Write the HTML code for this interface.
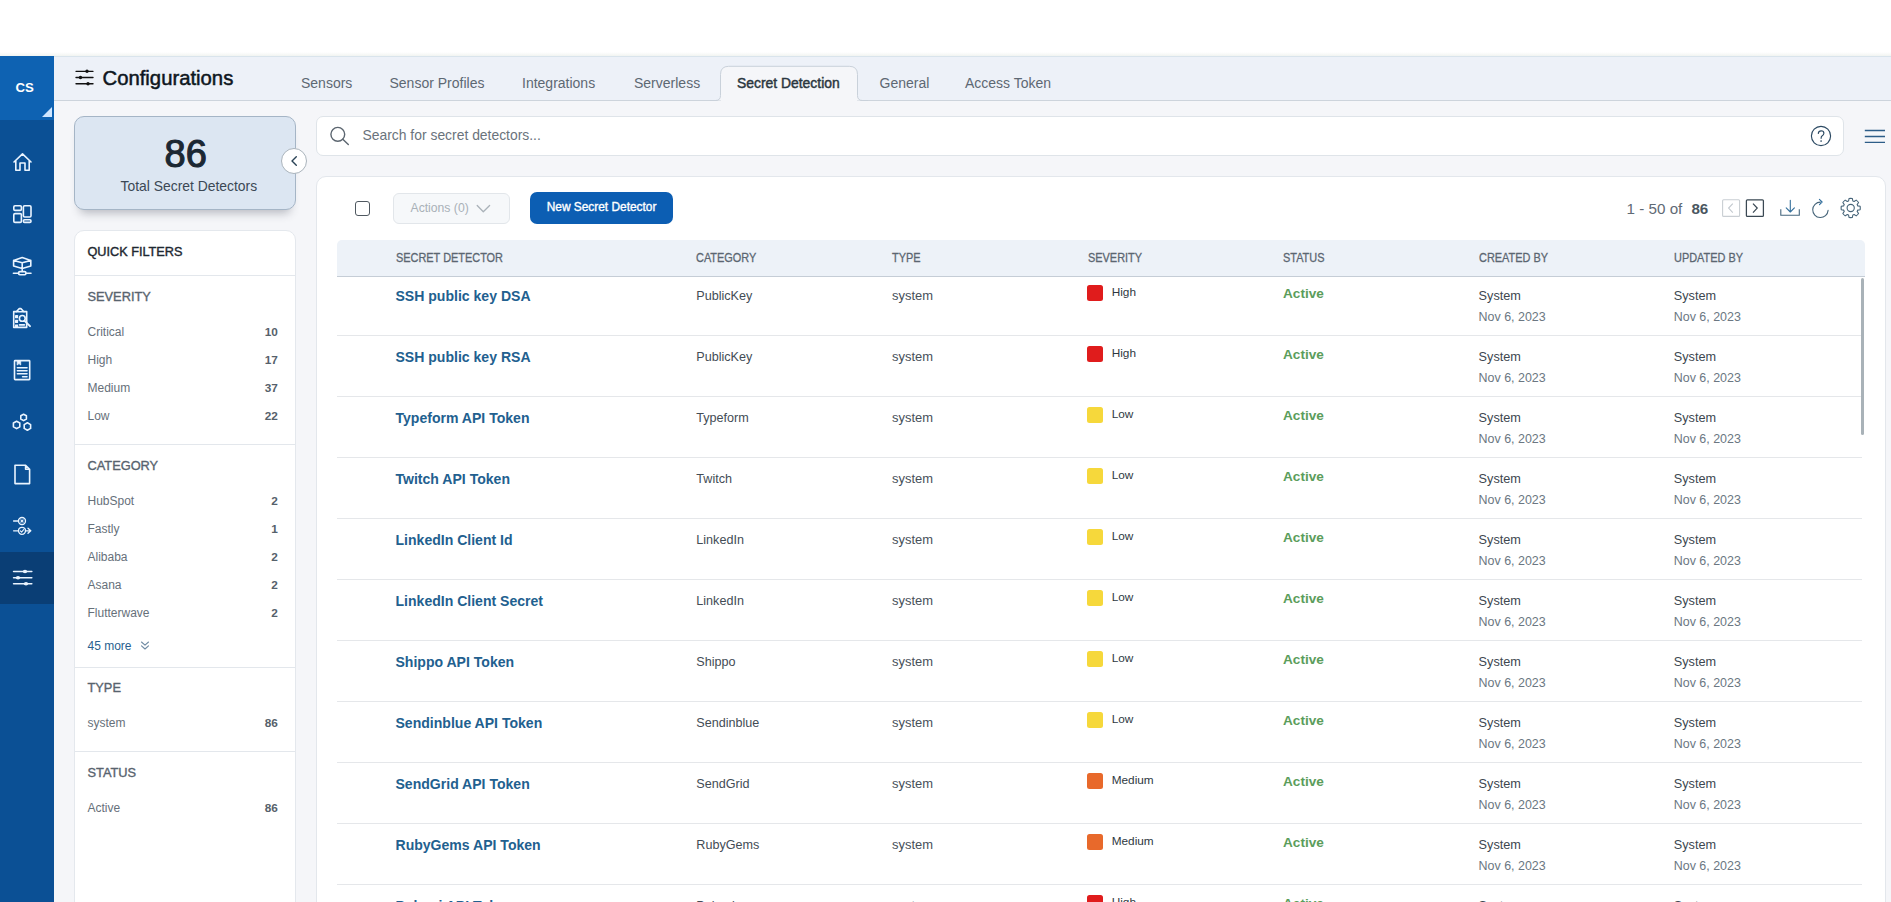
<!DOCTYPE html>
<html><head><meta charset="utf-8"><title>Configurations</title>
<style>
html,body{margin:0;padding:0;}
body{width:1891px;height:902px;overflow:hidden;position:relative;background:#fff;font-family:"Liberation Sans",sans-serif;}
.t{position:absolute;line-height:1;white-space:nowrap;}
.r{position:absolute;box-sizing:border-box;}
svg{position:absolute;overflow:visible;}
</style></head><body>

<div class="r" style="left:0px;top:52px;width:1891px;height:4px;background:linear-gradient(#fff,#f1f4f1);"></div>
<div class="r" style="left:54px;top:56px;width:1837px;height:846px;background:#f5f6f9;"></div>
<div class="r" style="left:54px;top:56px;width:1837px;height:45px;background:#edf1f8;border-top:1px solid #d9e4ec;border-bottom:1px solid #cdd4dc;"></div>
<div class="r" style="left:0px;top:56px;width:54px;height:846px;background:#0b5095;"></div>
<div class="r" style="left:0px;top:56px;width:54px;height:64px;background:#0e62b2;"></div>
<div class="r" style="left:0px;top:552px;width:54px;height:52px;background:#0a3e75;"></div>
<div class="t" style="left:15.5px;top:80.63px;font-size:13.2px;color:#fff;font-weight:700;">CS</div>
<svg style="left:42px;top:107px" width="10" height="10"><path d="M10 0 L10 10 L0 10 Z" fill="#cfe6ff"/></svg>
<svg style="left:0;top:0" width="54" height="902"><g fill="none" stroke="#eaf4ff" stroke-width="1.6" stroke-linejoin="round" stroke-linecap="round"><path d="M14 162 L22.5 153.8 L31 162 M15.8 160.5 V170.2 H20 V163 H25 V170.2 H29.2 V160.5"/><rect x="13.8" y="205.8" width="7.6" height="4.6" rx="1.2"/><rect x="13.8" y="213.6" width="7.6" height="8.8" rx="1.2"/><rect x="23.4" y="205.8" width="7.6" height="11.2" rx="1.2"/><rect x="23.4" y="219.8" width="7.6" height="2.6" rx="1.1"/><path d="M22.2 257.6 L30.8 260.4 V266 L22.2 268.4 L13.6 266 V260.4 Z M13.6 260.4 L22.2 262.8 L30.8 260.4 M22.2 262.8 V271.4"/><rect x="18.6" y="271.6" width="7.3" height="3.2" rx="1.2"/><path d="M13.4 273.2 H18.6 M25.9 273.2 H31"/><path d="M16.4 311.6 H13.7 V327.4 H26.7 V311.6 H23.9"/><path d="M16.3 311.7 L19.3 308.6 H20.9 L23.9 311.7 Z"/></g><g fill="#eaf4ff"><rect x="15" y="315.1" width="3.1" height="3.1" rx="0.4"/><rect x="15" y="319.8" width="3.1" height="3.1" rx="0.4"/><rect x="15" y="324.4" width="3.1" height="3.1" rx="0.4"/></g><g fill="none" stroke="#eaf4ff" stroke-width="1.6" stroke-linejoin="round" stroke-linecap="round"><circle cx="22.3" cy="318.4" r="2.9" fill="#0b5095"/><path d="M24.6 320.9 L30 326.1" stroke-width="2"/><path d="M19.6 324.8 H24.4" stroke-width="1.8"/><rect x="14.5" y="360.6" width="15.2" height="19" rx="0.6"/><path d="M17.2 361 V365 L19 363.6 L20.7 365 V361 Z" fill="#eaf4ff" stroke-width="0.8"/><path d="M17.4 367.7 H27 M17.4 370.7 H27 M17.4 373.7 H27 M22.6 376.7 H27"/><path d="M23.6 414.2 L26.4 415.8 V419 L23.6 420.6 L20.8 419 V415.8 Z"/><path d="M16.6 421.2 L19.8 423 V426.8 L16.6 428.6 L13.4 426.8 V423 Z"/><path d="M27.4 422.8 L30.6 424.6 V428.4 L27.4 430.2 L24.2 428.4 V424.6 Z"/><path d="M15 465.2 H25.6 L29.6 469.2 V483.6 H15 Z M25.6 465.2 V469.2 H29.6"/><g stroke-width="1.35"><path d="M13.6 521 H18.4 M13.6 530.8 H18.4 M25.6 530.8 H30.6 M28 528.3 L30.8 530.8 L28 533.3"/><circle cx="22" cy="521" r="3.5"/><circle cx="22" cy="530.8" r="3.5"/><path d="M20.9 519.9 L23.1 522.1 M23.1 519.9 L20.9 522.1 M20.4 530.9 L21.6 532.1 L23.6 529.7" stroke-width="1.1"/></g><path d="M13.6 571.5 H31.8 M13.6 577.7 H31.8 M13.6 583.7 H31.8"/></g><g fill="#eaf4ff"><ellipse cx="25" cy="571.5" rx="2.2" ry="1.7"/><ellipse cx="18" cy="577.7" rx="2.2" ry="1.7"/><ellipse cx="26" cy="583.7" rx="2.2" ry="1.7"/></g></svg>
<svg style="left:0;top:0" width="120" height="100"><g stroke="#111" stroke-width="1.35" stroke-linecap="round"><path d="M76 71.3 H93 M76 77.5 H93 M76 83.7 H93"/></g><g fill="#111"><circle cx="87" cy="71.3" r="1.7"/><circle cx="80.5" cy="77.5" r="1.7"/><circle cx="88" cy="83.7" r="1.7"/></g></svg>
<div class="t" style="left:102.5px;top:67.62px;font-size:20.3px;color:#0d1620;font-weight:400;-webkit-text-stroke:0.5px #0d1620;">Configurations</div>
<div class="t" style="left:301px;top:76.35px;font-size:14px;color:#5d6873;font-weight:400;">Sensors</div>
<div class="t" style="left:389.5px;top:76.35px;font-size:14px;color:#5d6873;font-weight:400;">Sensor Profiles</div>
<div class="t" style="left:522px;top:76.35px;font-size:14px;color:#5d6873;font-weight:400;">Integrations</div>
<div class="t" style="left:634px;top:76.35px;font-size:14px;color:#5d6873;font-weight:400;">Serverless</div>
<div class="t" style="left:879.5px;top:76.35px;font-size:14px;color:#5d6873;font-weight:400;">General</div>
<div class="t" style="left:965px;top:76.35px;font-size:14px;color:#5d6873;font-weight:400;">Access Token</div>
<svg style="left:710px;top:60px" width="160" height="42"><path d="M0 40.5 H5.5 Q10.5 40.5 10.5 35.5 V14.5 Q10.5 6.3 18.7 6.3 H139.3 Q147.5 6.3 147.5 14.5 V35.5 Q147.5 40.5 152.5 40.5 H158" fill="#f5f6f9" stroke="#c9d1da" stroke-width="1"/><rect x="11" y="40" width="136" height="3" fill="#f5f6f9"/></svg>
<div class="t" style="left:737px;top:77.23px;font-size:13.9px;color:#2b3640;font-weight:400;-webkit-text-stroke:0.45px #2b3640;">Secret Detection</div>
<div class="r" style="left:74px;top:116px;width:222px;height:94px;background:#dce6f2;border:1px solid #a5b5c6;border-radius:10px;box-shadow:0 9px 10px -6px rgba(50,55,70,0.32);"></div>
<div class="t" style="left:164.5px;top:135.03px;font-size:38px;color:#1b2733;font-weight:400;-webkit-text-stroke:1.1px #1b2733;">86</div>
<div class="t" style="left:120.5px;top:180.23px;font-size:13.9px;color:#3b4855;font-weight:400;">Total Secret Detectors</div>
<div class="r" style="left:281px;top:148px;width:26px;height:26px;background:#fff;border:1px solid #aab4bc;border-radius:50%;"></div>
<svg style="left:280px;top:147px" width="28" height="28"><path d="M16.3 9.8 L12 14 L16.3 18.2" fill="none" stroke="#2a4356" stroke-width="1.4" stroke-linecap="round" stroke-linejoin="round"/></svg>
<div class="r" style="left:74px;top:230px;width:222px;height:700px;background:#fff;border:1px solid #e4e8ed;border-radius:10px;"></div>
<div class="t" style="left:87.5px;top:246.15px;font-size:12.7px;color:#1e2831;font-weight:400;-webkit-text-stroke:0.4px #1e2831;">QUICK FILTERS</div>
<div class="r" style="left:75px;top:275px;width:220px;height:1px;background:#e3e7ec;"></div>

<div class="t" style="left:87.5px;top:290.96px;font-size:12.8px;color:#58636e;font-weight:400;-webkit-text-stroke:0.35px #58636e;">SEVERITY</div>
<div class="t" style="left:87.5px;top:325.84px;font-size:12px;color:#66707a;font-weight:400;">Critical</div>
<div class="t" style="right:1613.2px;top:326.81px;font-size:11.8px;color:#56616b;font-weight:700">10</div>
<div class="t" style="left:87.5px;top:353.84px;font-size:12px;color:#66707a;font-weight:400;">High</div>
<div class="t" style="right:1613.2px;top:354.81px;font-size:11.8px;color:#56616b;font-weight:700">17</div>
<div class="t" style="left:87.5px;top:381.84px;font-size:12px;color:#66707a;font-weight:400;">Medium</div>
<div class="t" style="right:1613.2px;top:382.81px;font-size:11.8px;color:#56616b;font-weight:700">37</div>
<div class="t" style="left:87.5px;top:409.84px;font-size:12px;color:#66707a;font-weight:400;">Low</div>
<div class="t" style="right:1613.2px;top:410.81px;font-size:11.8px;color:#56616b;font-weight:700">22</div>
<div class="r" style="left:75px;top:444px;width:220px;height:1px;background:#e3e7ec;"></div>
<div class="t" style="left:87.5px;top:460.16px;font-size:12.8px;color:#58636e;font-weight:400;-webkit-text-stroke:0.35px #58636e;">CATEGORY</div>
<div class="t" style="left:87.5px;top:495.04px;font-size:12px;color:#66707a;font-weight:400;">HubSpot</div>
<div class="t" style="right:1613.2px;top:496.01px;font-size:11.8px;color:#56616b;font-weight:700">2</div>
<div class="t" style="left:87.5px;top:523.04px;font-size:12px;color:#66707a;font-weight:400;">Fastly</div>
<div class="t" style="right:1613.2px;top:524.01px;font-size:11.8px;color:#56616b;font-weight:700">1</div>
<div class="t" style="left:87.5px;top:551.04px;font-size:12px;color:#66707a;font-weight:400;">Alibaba</div>
<div class="t" style="right:1613.2px;top:552.01px;font-size:11.8px;color:#56616b;font-weight:700">2</div>
<div class="t" style="left:87.5px;top:579.04px;font-size:12px;color:#66707a;font-weight:400;">Asana</div>
<div class="t" style="right:1613.2px;top:580.01px;font-size:11.8px;color:#56616b;font-weight:700">2</div>
<div class="t" style="left:87.5px;top:607.04px;font-size:12px;color:#66707a;font-weight:400;">Flutterwave</div>
<div class="t" style="right:1613.2px;top:608.01px;font-size:11.8px;color:#56616b;font-weight:700">2</div>
<div class="t" style="left:87.5px;top:639.84px;font-size:12px;color:#2a5f8f;font-weight:400;">45 more</div>
<svg style="left:140px;top:640px" width="12" height="12"><path d="M1.5 2 L5 5.2 L8.5 2 M1.5 5.8 L5 9 L8.5 5.8" fill="none" stroke="#6f8aa3" stroke-width="1.1" stroke-linecap="round" stroke-linejoin="round"/></svg>
<div class="r" style="left:75px;top:666.5px;width:220px;height:1px;background:#e3e7ec;"></div>
<div class="t" style="left:87.5px;top:682.46px;font-size:12.8px;color:#58636e;font-weight:400;-webkit-text-stroke:0.35px #58636e;">TYPE</div>
<div class="t" style="left:87.5px;top:716.84px;font-size:12px;color:#66707a;font-weight:400;">system</div>
<div class="t" style="right:1613.2px;top:717.81px;font-size:11.8px;color:#56616b;font-weight:700">86</div>
<div class="r" style="left:75px;top:751px;width:220px;height:1px;background:#e3e7ec;"></div>
<div class="t" style="left:87.5px;top:767.16px;font-size:12.8px;color:#58636e;font-weight:400;-webkit-text-stroke:0.35px #58636e;">STATUS</div>
<div class="t" style="left:87.5px;top:801.54px;font-size:12px;color:#66707a;font-weight:400;">Active</div>
<div class="t" style="right:1613.2px;top:802.51px;font-size:11.8px;color:#56616b;font-weight:700">86</div>
<div class="r" style="left:316px;top:116px;width:1527.5px;height:40px;background:#fff;border:1px solid #dfe4e9;border-radius:7px;"></div>
<svg style="left:320px;top:120px" width="40" height="32"><circle cx="17.8" cy="14.3" r="6.9" fill="none" stroke="#5c6670" stroke-width="1.4"/><path d="M22.8 19.3 L28.3 24.6" stroke="#5c6670" stroke-width="1.4" stroke-linecap="round"/></svg>
<div class="t" style="left:362.5px;top:129.43px;font-size:13.9px;color:#6a737c;font-weight:400;">Search for secret detectors...</div>
<svg style="left:1800px;top:115px" width="90" height="42"><circle cx="21" cy="21" r="9.6" fill="none" stroke="#2b4962" stroke-width="1.15"/><path d="M18.3 18.4 Q18.5 15.8 21.2 15.8 Q23.9 15.9 23.9 18.3 Q23.8 19.9 22 20.9 Q21.1 21.5 21.1 23.3" fill="none" stroke="#2b4962" stroke-width="1.15" stroke-linecap="round"/><circle cx="21.1" cy="26" r="0.85" fill="#2b4962"/><path d="M64.8 15.5 H85 M64.8 21.5 H85 M64.8 27.4 H85" stroke="#2d5d88" stroke-width="1.3"/></svg>
<div class="r" style="left:316px;top:175.5px;width:1569.5px;height:760px;background:#fff;border:1px solid #e3e7ec;border-radius:10px;"></div>
<div class="r" style="left:354.5px;top:200.5px;width:15.5px;height:15.5px;border:1.4px solid #4f5860;border-radius:3px;background:#fff;"></div>
<div class="r" style="left:393px;top:192.5px;width:116.5px;height:31.5px;background:#f6f8fa;border:1px solid #e2e6ea;border-radius:6px;"></div>
<div class="t" style="left:410.5px;top:201.67px;font-size:12.2px;color:#a9b1b8;font-weight:400;">Actions (0)</div>
<svg style="left:470px;top:198px" width="24" height="20"><path d="M7.2 7.5 L13.3 13.8 L19.6 7.5" fill="none" stroke="#aab2b9" stroke-width="1.3" stroke-linecap="round" stroke-linejoin="round"/></svg>
<div class="r" style="left:530px;top:192px;width:143px;height:32px;background:#0c5eb3;border-radius:7px;"></div>
<div class="t" style="left:546.7px;top:201.93px;font-size:11.9px;color:#fff;font-weight:400;-webkit-text-stroke:0.35px #fff;">New Secret Detector</div>
<div class="t" style="left:1626.6px;top:200.83px;font-size:15.2px;color:#5f6a75;font-weight:400;">1 - 50 of</div>
<div class="t" style="left:1691.4px;top:200.83px;font-size:15.2px;color:#4a5660;font-weight:700;">86</div>
<svg style="left:0;top:0" width="1891" height="300"><rect x="1722.6" y="199.8" width="17" height="16.6" rx="1" fill="none" stroke="#c9ced3" stroke-width="1.1"/><path d="M1732.8 203.6 L1728.6 208.1 L1732.8 212.6" fill="none" stroke="#c2c8ce" stroke-width="1.1"/><rect x="1746.4" y="199.8" width="17" height="16.6" rx="1" fill="none" stroke="#3a4853" stroke-width="1.25"/><path d="M1753 203.6 L1757.2 208.1 L1753 212.6" fill="none" stroke="#3a4853" stroke-width="1.25"/><g fill="none" stroke="#46677f" stroke-width="1.1" stroke-linecap="butt" stroke-linejoin="miter"><path d="M1780.8 209.2 V215.2 H1799.3 V209.2"/></g><g fill="none" stroke="#35709c" stroke-width="1.1" stroke-linecap="round" stroke-linejoin="round"><path d="M1790.3 200.2 V211.8 M1786.2 207.9 L1790.3 212 L1794.4 207.9"/></g><g fill="none" stroke="#466479" stroke-width="1.1" stroke-linecap="round" stroke-linejoin="round"><path d="M1820.4 202.1 A7.7 7.7 0 1 0 1828.1 210.4"/><path d="M1819.4 199.3 L1822.1 202 L1819.5 204.6" stroke="#2f6f9f"/><path d="M1848.57 201.02 L1849.03 198.55 A9.6 9.6 0 0 1 1852.37 198.55 L1852.83 201.02 A7.3 7.3 0 0 1 1854.13 201.55 L1856.21 200.14 A9.6 9.6 0 0 1 1858.56 202.49 L1857.15 204.57 A7.3 7.3 0 0 1 1857.68 205.87 L1860.15 206.33 A9.6 9.6 0 0 1 1860.15 209.67 L1857.68 210.13 A7.3 7.3 0 0 1 1857.15 211.43 L1858.56 213.51 A9.6 9.6 0 0 1 1856.21 215.86 L1854.13 214.45 A7.3 7.3 0 0 1 1852.83 214.98 L1852.37 217.45 A9.6 9.6 0 0 1 1849.03 217.45 L1848.57 214.98 A7.3 7.3 0 0 1 1847.27 214.45 L1845.19 215.86 A9.6 9.6 0 0 1 1842.84 213.51 L1844.25 211.43 A7.3 7.3 0 0 1 1843.72 210.13 L1841.25 209.67 A9.6 9.6 0 0 1 1841.25 206.33 L1843.72 205.87 A7.3 7.3 0 0 1 1844.25 204.57 L1842.84 202.49 A9.6 9.6 0 0 1 1845.19 200.14 L1847.27 201.55 A7.3 7.3 0 0 1 1848.57 201.02 Z"/><circle cx="1850.7" cy="208" r="3.6"/></g></svg>
<div class="r" style="left:336.7px;top:240.3px;width:1528px;height:36.5px;background:#edf2f8;border-bottom:1px solid #c5cdd6;border-radius:5px 5px 0 0;"></div>
<div class="t" style="left:395.5px;top:251.00px;font-size:13px;color:#5b6671;font-weight:400;-webkit-text-stroke:0.3px #5b6671;"><span style="display:inline-block;transform:scaleX(0.84);transform-origin:0 0">SECRET DETECTOR</span></div>
<div class="t" style="left:696.3px;top:251.00px;font-size:13px;color:#5b6671;font-weight:400;-webkit-text-stroke:0.3px #5b6671;"><span style="display:inline-block;transform:scaleX(0.84);transform-origin:0 0">CATEGORY</span></div>
<div class="t" style="left:892px;top:251.00px;font-size:13px;color:#5b6671;font-weight:400;-webkit-text-stroke:0.3px #5b6671;"><span style="display:inline-block;transform:scaleX(0.84);transform-origin:0 0">TYPE</span></div>
<div class="t" style="left:1087.6px;top:251.00px;font-size:13px;color:#5b6671;font-weight:400;-webkit-text-stroke:0.3px #5b6671;"><span style="display:inline-block;transform:scaleX(0.84);transform-origin:0 0">SEVERITY</span></div>
<div class="t" style="left:1283px;top:251.00px;font-size:13px;color:#5b6671;font-weight:400;-webkit-text-stroke:0.3px #5b6671;"><span style="display:inline-block;transform:scaleX(0.84);transform-origin:0 0">STATUS</span></div>
<div class="t" style="left:1478.6px;top:251.00px;font-size:13px;color:#5b6671;font-weight:400;-webkit-text-stroke:0.3px #5b6671;"><span style="display:inline-block;transform:scaleX(0.84);transform-origin:0 0">CREATED BY</span></div>
<div class="t" style="left:1673.8px;top:251.00px;font-size:13px;color:#5b6671;font-weight:400;-webkit-text-stroke:0.3px #5b6671;"><span style="display:inline-block;transform:scaleX(0.84);transform-origin:0 0">UPDATED BY</span></div>
<div class="t" style="left:395.5px;top:288.81px;font-size:14.05px;color:#22608f;font-weight:700;">SSH public key DSA</div>
<div class="t" style="left:696.3px;top:290.33px;font-size:12.6px;color:#434c55;font-weight:400;">PublicKey</div>
<div class="t" style="left:892px;top:290.04px;font-size:12.95px;color:#48515a;font-weight:400;">system</div>
<div class="r" style="left:1087.2px;top:285.2px;width:15.6px;height:15.6px;background:#e01c1c;border-radius:2.5px;"></div>
<div class="t" style="left:1111.7px;top:286.81px;font-size:11.8px;color:#2e3841;font-weight:400;">High</div>
<div class="t" style="left:1283px;top:287.39px;font-size:13.6px;color:#5b9d5b;font-weight:700;">Active</div>
<div class="t" style="left:1478.6px;top:290.25px;font-size:12.7px;color:#3d4750;font-weight:400;">System</div>
<div class="t" style="left:1478.6px;top:311.46px;font-size:12.45px;color:#6b7782;font-weight:400;">Nov 6, 2023</div>
<div class="t" style="left:1673.8px;top:290.25px;font-size:12.7px;color:#3d4750;font-weight:400;">System</div>
<div class="t" style="left:1673.8px;top:311.46px;font-size:12.45px;color:#6b7782;font-weight:400;">Nov 6, 2023</div>
<div class="r" style="left:336.7px;top:335px;width:1525px;height:1px;background:#e5e7ea;"></div>
<div class="t" style="left:395.5px;top:349.81px;font-size:14.05px;color:#22608f;font-weight:700;">SSH public key RSA</div>
<div class="t" style="left:696.3px;top:351.33px;font-size:12.6px;color:#434c55;font-weight:400;">PublicKey</div>
<div class="t" style="left:892px;top:351.04px;font-size:12.95px;color:#48515a;font-weight:400;">system</div>
<div class="r" style="left:1087.2px;top:346.2px;width:15.6px;height:15.6px;background:#e01c1c;border-radius:2.5px;"></div>
<div class="t" style="left:1111.7px;top:347.81px;font-size:11.8px;color:#2e3841;font-weight:400;">High</div>
<div class="t" style="left:1283px;top:348.39px;font-size:13.6px;color:#5b9d5b;font-weight:700;">Active</div>
<div class="t" style="left:1478.6px;top:351.25px;font-size:12.7px;color:#3d4750;font-weight:400;">System</div>
<div class="t" style="left:1478.6px;top:372.46px;font-size:12.45px;color:#6b7782;font-weight:400;">Nov 6, 2023</div>
<div class="t" style="left:1673.8px;top:351.25px;font-size:12.7px;color:#3d4750;font-weight:400;">System</div>
<div class="t" style="left:1673.8px;top:372.46px;font-size:12.45px;color:#6b7782;font-weight:400;">Nov 6, 2023</div>
<div class="r" style="left:336.7px;top:396px;width:1525px;height:1px;background:#e5e7ea;"></div>
<div class="t" style="left:395.5px;top:410.81px;font-size:14.05px;color:#22608f;font-weight:700;">Typeform API Token</div>
<div class="t" style="left:696.3px;top:412.33px;font-size:12.6px;color:#434c55;font-weight:400;">Typeform</div>
<div class="t" style="left:892px;top:412.04px;font-size:12.95px;color:#48515a;font-weight:400;">system</div>
<div class="r" style="left:1087.2px;top:407.2px;width:15.6px;height:15.6px;background:#f6d83b;border-radius:2.5px;"></div>
<div class="t" style="left:1111.7px;top:408.81px;font-size:11.8px;color:#2e3841;font-weight:400;">Low</div>
<div class="t" style="left:1283px;top:409.39px;font-size:13.6px;color:#5b9d5b;font-weight:700;">Active</div>
<div class="t" style="left:1478.6px;top:412.25px;font-size:12.7px;color:#3d4750;font-weight:400;">System</div>
<div class="t" style="left:1478.6px;top:433.46px;font-size:12.45px;color:#6b7782;font-weight:400;">Nov 6, 2023</div>
<div class="t" style="left:1673.8px;top:412.25px;font-size:12.7px;color:#3d4750;font-weight:400;">System</div>
<div class="t" style="left:1673.8px;top:433.46px;font-size:12.45px;color:#6b7782;font-weight:400;">Nov 6, 2023</div>
<div class="r" style="left:336.7px;top:457px;width:1525px;height:1px;background:#e5e7ea;"></div>
<div class="t" style="left:395.5px;top:471.81px;font-size:14.05px;color:#22608f;font-weight:700;">Twitch API Token</div>
<div class="t" style="left:696.3px;top:473.33px;font-size:12.6px;color:#434c55;font-weight:400;">Twitch</div>
<div class="t" style="left:892px;top:473.04px;font-size:12.95px;color:#48515a;font-weight:400;">system</div>
<div class="r" style="left:1087.2px;top:468.2px;width:15.6px;height:15.6px;background:#f6d83b;border-radius:2.5px;"></div>
<div class="t" style="left:1111.7px;top:469.81px;font-size:11.8px;color:#2e3841;font-weight:400;">Low</div>
<div class="t" style="left:1283px;top:470.39px;font-size:13.6px;color:#5b9d5b;font-weight:700;">Active</div>
<div class="t" style="left:1478.6px;top:473.25px;font-size:12.7px;color:#3d4750;font-weight:400;">System</div>
<div class="t" style="left:1478.6px;top:494.46px;font-size:12.45px;color:#6b7782;font-weight:400;">Nov 6, 2023</div>
<div class="t" style="left:1673.8px;top:473.25px;font-size:12.7px;color:#3d4750;font-weight:400;">System</div>
<div class="t" style="left:1673.8px;top:494.46px;font-size:12.45px;color:#6b7782;font-weight:400;">Nov 6, 2023</div>
<div class="r" style="left:336.7px;top:518px;width:1525px;height:1px;background:#e5e7ea;"></div>
<div class="t" style="left:395.5px;top:532.81px;font-size:14.05px;color:#22608f;font-weight:700;">LinkedIn Client Id</div>
<div class="t" style="left:696.3px;top:534.33px;font-size:12.6px;color:#434c55;font-weight:400;">LinkedIn</div>
<div class="t" style="left:892px;top:534.04px;font-size:12.95px;color:#48515a;font-weight:400;">system</div>
<div class="r" style="left:1087.2px;top:529.2px;width:15.6px;height:15.6px;background:#f6d83b;border-radius:2.5px;"></div>
<div class="t" style="left:1111.7px;top:530.81px;font-size:11.8px;color:#2e3841;font-weight:400;">Low</div>
<div class="t" style="left:1283px;top:531.39px;font-size:13.6px;color:#5b9d5b;font-weight:700;">Active</div>
<div class="t" style="left:1478.6px;top:534.25px;font-size:12.7px;color:#3d4750;font-weight:400;">System</div>
<div class="t" style="left:1478.6px;top:555.46px;font-size:12.45px;color:#6b7782;font-weight:400;">Nov 6, 2023</div>
<div class="t" style="left:1673.8px;top:534.25px;font-size:12.7px;color:#3d4750;font-weight:400;">System</div>
<div class="t" style="left:1673.8px;top:555.46px;font-size:12.45px;color:#6b7782;font-weight:400;">Nov 6, 2023</div>
<div class="r" style="left:336.7px;top:579px;width:1525px;height:1px;background:#e5e7ea;"></div>
<div class="t" style="left:395.5px;top:593.81px;font-size:14.05px;color:#22608f;font-weight:700;">LinkedIn Client Secret</div>
<div class="t" style="left:696.3px;top:595.33px;font-size:12.6px;color:#434c55;font-weight:400;">LinkedIn</div>
<div class="t" style="left:892px;top:595.04px;font-size:12.95px;color:#48515a;font-weight:400;">system</div>
<div class="r" style="left:1087.2px;top:590.2px;width:15.6px;height:15.6px;background:#f6d83b;border-radius:2.5px;"></div>
<div class="t" style="left:1111.7px;top:591.81px;font-size:11.8px;color:#2e3841;font-weight:400;">Low</div>
<div class="t" style="left:1283px;top:592.39px;font-size:13.6px;color:#5b9d5b;font-weight:700;">Active</div>
<div class="t" style="left:1478.6px;top:595.25px;font-size:12.7px;color:#3d4750;font-weight:400;">System</div>
<div class="t" style="left:1478.6px;top:616.46px;font-size:12.45px;color:#6b7782;font-weight:400;">Nov 6, 2023</div>
<div class="t" style="left:1673.8px;top:595.25px;font-size:12.7px;color:#3d4750;font-weight:400;">System</div>
<div class="t" style="left:1673.8px;top:616.46px;font-size:12.45px;color:#6b7782;font-weight:400;">Nov 6, 2023</div>
<div class="r" style="left:336.7px;top:640px;width:1525px;height:1px;background:#e5e7ea;"></div>
<div class="t" style="left:395.5px;top:654.81px;font-size:14.05px;color:#22608f;font-weight:700;">Shippo API Token</div>
<div class="t" style="left:696.3px;top:656.33px;font-size:12.6px;color:#434c55;font-weight:400;">Shippo</div>
<div class="t" style="left:892px;top:656.04px;font-size:12.95px;color:#48515a;font-weight:400;">system</div>
<div class="r" style="left:1087.2px;top:651.2px;width:15.6px;height:15.6px;background:#f6d83b;border-radius:2.5px;"></div>
<div class="t" style="left:1111.7px;top:652.81px;font-size:11.8px;color:#2e3841;font-weight:400;">Low</div>
<div class="t" style="left:1283px;top:653.39px;font-size:13.6px;color:#5b9d5b;font-weight:700;">Active</div>
<div class="t" style="left:1478.6px;top:656.25px;font-size:12.7px;color:#3d4750;font-weight:400;">System</div>
<div class="t" style="left:1478.6px;top:677.46px;font-size:12.45px;color:#6b7782;font-weight:400;">Nov 6, 2023</div>
<div class="t" style="left:1673.8px;top:656.25px;font-size:12.7px;color:#3d4750;font-weight:400;">System</div>
<div class="t" style="left:1673.8px;top:677.46px;font-size:12.45px;color:#6b7782;font-weight:400;">Nov 6, 2023</div>
<div class="r" style="left:336.7px;top:701px;width:1525px;height:1px;background:#e5e7ea;"></div>
<div class="t" style="left:395.5px;top:715.81px;font-size:14.05px;color:#22608f;font-weight:700;">Sendinblue API Token</div>
<div class="t" style="left:696.3px;top:717.33px;font-size:12.6px;color:#434c55;font-weight:400;">Sendinblue</div>
<div class="t" style="left:892px;top:717.04px;font-size:12.95px;color:#48515a;font-weight:400;">system</div>
<div class="r" style="left:1087.2px;top:712.2px;width:15.6px;height:15.6px;background:#f6d83b;border-radius:2.5px;"></div>
<div class="t" style="left:1111.7px;top:713.81px;font-size:11.8px;color:#2e3841;font-weight:400;">Low</div>
<div class="t" style="left:1283px;top:714.39px;font-size:13.6px;color:#5b9d5b;font-weight:700;">Active</div>
<div class="t" style="left:1478.6px;top:717.25px;font-size:12.7px;color:#3d4750;font-weight:400;">System</div>
<div class="t" style="left:1478.6px;top:738.46px;font-size:12.45px;color:#6b7782;font-weight:400;">Nov 6, 2023</div>
<div class="t" style="left:1673.8px;top:717.25px;font-size:12.7px;color:#3d4750;font-weight:400;">System</div>
<div class="t" style="left:1673.8px;top:738.46px;font-size:12.45px;color:#6b7782;font-weight:400;">Nov 6, 2023</div>
<div class="r" style="left:336.7px;top:762px;width:1525px;height:1px;background:#e5e7ea;"></div>
<div class="t" style="left:395.5px;top:776.81px;font-size:14.05px;color:#22608f;font-weight:700;">SendGrid API Token</div>
<div class="t" style="left:696.3px;top:778.33px;font-size:12.6px;color:#434c55;font-weight:400;">SendGrid</div>
<div class="t" style="left:892px;top:778.04px;font-size:12.95px;color:#48515a;font-weight:400;">system</div>
<div class="r" style="left:1087.2px;top:773.2px;width:15.6px;height:15.6px;background:#e8692b;border-radius:2.5px;"></div>
<div class="t" style="left:1111.7px;top:774.81px;font-size:11.8px;color:#2e3841;font-weight:400;">Medium</div>
<div class="t" style="left:1283px;top:775.39px;font-size:13.6px;color:#5b9d5b;font-weight:700;">Active</div>
<div class="t" style="left:1478.6px;top:778.25px;font-size:12.7px;color:#3d4750;font-weight:400;">System</div>
<div class="t" style="left:1478.6px;top:799.46px;font-size:12.45px;color:#6b7782;font-weight:400;">Nov 6, 2023</div>
<div class="t" style="left:1673.8px;top:778.25px;font-size:12.7px;color:#3d4750;font-weight:400;">System</div>
<div class="t" style="left:1673.8px;top:799.46px;font-size:12.45px;color:#6b7782;font-weight:400;">Nov 6, 2023</div>
<div class="r" style="left:336.7px;top:823px;width:1525px;height:1px;background:#e5e7ea;"></div>
<div class="t" style="left:395.5px;top:837.81px;font-size:14.05px;color:#22608f;font-weight:700;">RubyGems API Token</div>
<div class="t" style="left:696.3px;top:839.33px;font-size:12.6px;color:#434c55;font-weight:400;">RubyGems</div>
<div class="t" style="left:892px;top:839.04px;font-size:12.95px;color:#48515a;font-weight:400;">system</div>
<div class="r" style="left:1087.2px;top:834.2px;width:15.6px;height:15.6px;background:#e8692b;border-radius:2.5px;"></div>
<div class="t" style="left:1111.7px;top:835.81px;font-size:11.8px;color:#2e3841;font-weight:400;">Medium</div>
<div class="t" style="left:1283px;top:836.39px;font-size:13.6px;color:#5b9d5b;font-weight:700;">Active</div>
<div class="t" style="left:1478.6px;top:839.25px;font-size:12.7px;color:#3d4750;font-weight:400;">System</div>
<div class="t" style="left:1478.6px;top:860.46px;font-size:12.45px;color:#6b7782;font-weight:400;">Nov 6, 2023</div>
<div class="t" style="left:1673.8px;top:839.25px;font-size:12.7px;color:#3d4750;font-weight:400;">System</div>
<div class="t" style="left:1673.8px;top:860.46px;font-size:12.45px;color:#6b7782;font-weight:400;">Nov 6, 2023</div>
<div class="r" style="left:336.7px;top:884px;width:1525px;height:1px;background:#e5e7ea;"></div>
<div class="t" style="left:395.5px;top:898.81px;font-size:14.05px;color:#22608f;font-weight:700;">Pulumi API Token</div>
<div class="t" style="left:696.3px;top:900.33px;font-size:12.6px;color:#434c55;font-weight:400;">Pulumi</div>
<div class="t" style="left:892px;top:900.04px;font-size:12.95px;color:#48515a;font-weight:400;">system</div>
<div class="r" style="left:1087.2px;top:895.2px;width:15.6px;height:15.6px;background:#e01c1c;border-radius:2.5px;"></div>
<div class="t" style="left:1111.7px;top:896.81px;font-size:11.8px;color:#2e3841;font-weight:400;">High</div>
<div class="t" style="left:1283px;top:897.39px;font-size:13.6px;color:#5b9d5b;font-weight:700;">Active</div>
<div class="t" style="left:1478.6px;top:900.25px;font-size:12.7px;color:#3d4750;font-weight:400;">System</div>
<div class="t" style="left:1478.6px;top:921.46px;font-size:12.45px;color:#6b7782;font-weight:400;">Nov 6, 2023</div>
<div class="t" style="left:1673.8px;top:900.25px;font-size:12.7px;color:#3d4750;font-weight:400;">System</div>
<div class="t" style="left:1673.8px;top:921.46px;font-size:12.45px;color:#6b7782;font-weight:400;">Nov 6, 2023</div>
<div class="r" style="left:1861px;top:277.5px;width:3.4px;height:157px;background:#a9b2b8;border-radius:2px;"></div>
</body></html>
